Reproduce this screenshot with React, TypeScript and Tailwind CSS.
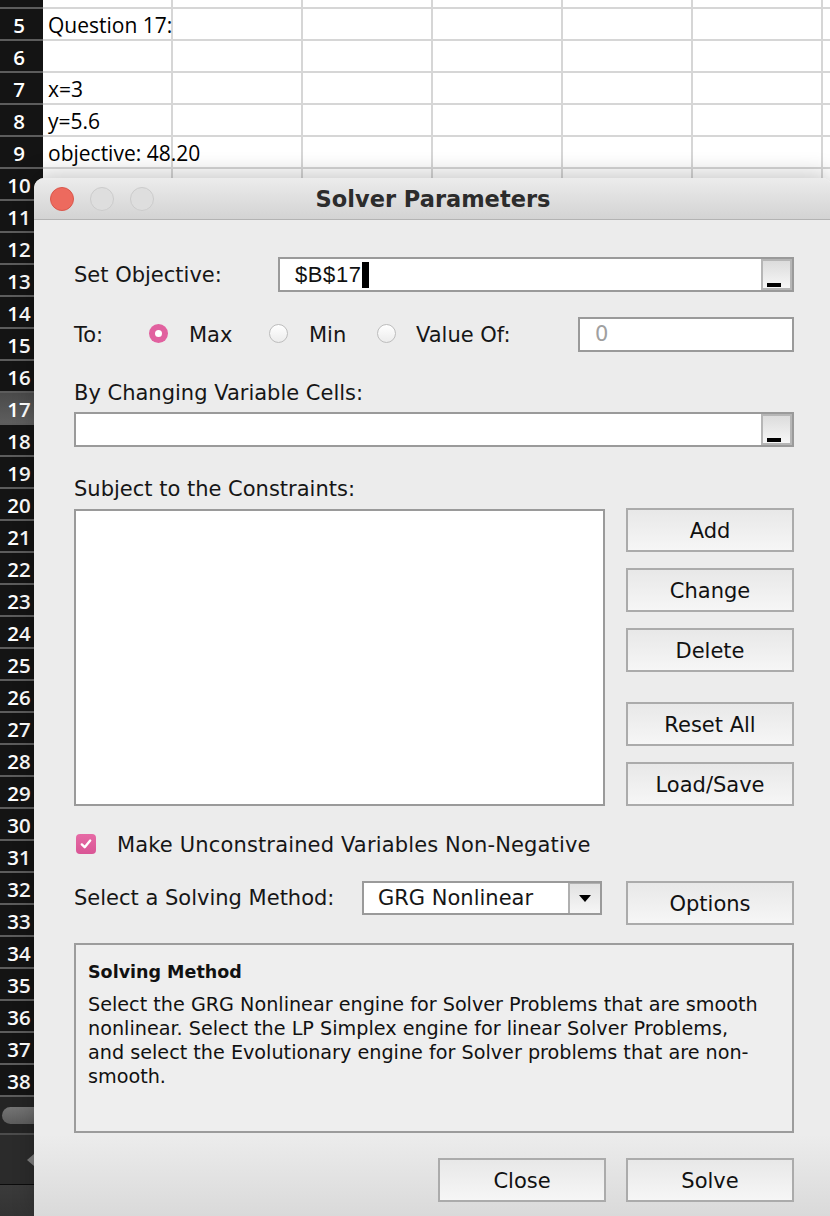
import React from "react";

const ROWS = Array.from({ length: 34 }, (_, i) => i + 5);
const CELL_TEXT: Record<number, string> = {
  5: "Question 17:",
  7: "x=3",
  8: "y=5.6",
  9: "objective: 48.20",
};

function SheetRow({ n }: { n: number }) {
  return (
    <div className="h-[32px] flex border-b-2 border-[#d6d6d6] box-border">
      <div className="w-[130px] shrink-0 border-r-2 border-[#d6d6d6] relative">
        {CELL_TEXT[n] && (
          <span className="absolute left-[5px] top-[2px] h-[30px] flex items-center whitespace-nowrap text-[21px] text-black font-['Open_Sans',sans-serif]">
            {CELL_TEXT[n]}
          </span>
        )}
      </div>
      <div className="w-[130px] shrink-0 border-r-2 border-[#d6d6d6]" />
      <div className="w-[130px] shrink-0 border-r-2 border-[#d6d6d6]" />
      <div className="w-[130px] shrink-0 border-r-2 border-[#d6d6d6]" />
      <div className="w-[130px] shrink-0 border-r-2 border-[#d6d6d6]" />
      <div className="w-[130px] shrink-0 border-r-2 border-[#d6d6d6]" />
      <div className="flex-1" />
    </div>
  );
}

function PickerInput({ children }: { children?: React.ReactNode }) {
  return (
    <div className="flex-1 h-[35px] border-2 border-[#9a9a9a] bg-white flex box-border">
      <div className="flex-1 flex items-center pl-[15px]">{children}</div>
      <div className="w-[31px] h-full border-2 border-[#b6b6b6] bg-gradient-to-b from-[#dcdcdc] to-[#f7f7f7] flex items-end pl-[4px] pb-[1px] box-border">
        <div className="w-[14px] h-[4px] bg-black" />
      </div>
    </div>
  );
}

function Radio({ on }: { on?: boolean }) {
  if (on)
    return (
      <div className="w-[19px] h-[19px] rounded-full bg-[#e1619f] flex items-center justify-center shrink-0 -mt-[2px]">
        <div className="w-[7px] h-[7px] rounded-full bg-white" />
      </div>
    );
  return (
    <div className="w-[19px] h-[19px] rounded-full border border-[#bdbdbd] bg-gradient-to-b from-white to-[#ececec] shrink-0 box-border -mt-[2px]" />
  );
}

function Btn({ children, className = "" }: { children: React.ReactNode; className?: string }) {
  return (
    <div
      className={`w-[168px] h-[44px] border-2 border-[#ababab] bg-gradient-to-b from-[#e8e8e8] to-[#f6f6f6] flex items-center justify-center pt-[3px] text-[21px] text-[#111] box-border ${className}`}
    >
      {children}
    </div>
  );
}

export default function App() {
  return (
    <div className="relative w-[830px] h-[1216px] overflow-hidden bg-white">
      <div className="flex h-full">
        {/* row headers */}
        <div className="w-[43px] shrink-0 flex flex-col bg-[#141414] font-['Open_Sans',sans-serif]">
          <div className="h-[9px] border-b-2 border-[#5c5c5c] box-border" />
          {ROWS.map((n) => (
            <div
              key={n}
              className={`h-[32px] shrink-0 border-b-2 border-[#5c5c5c] box-border flex items-center justify-center pr-[5px] pt-[3px] text-white text-[20.5px] font-semibold ${
                n === 17 ? "bg-gradient-to-b from-[#4a4a4a] to-[#5e5e5e] text-[#e8e8e8]" : ""
              }`}
            >
              {n}
            </div>
          ))}
          <div className="h-[38px] shrink-0 bg-[#242424] border-b-2 border-[#4c4c4c] box-border flex items-center">
            <div className="ml-[2px] w-[60px] h-[17px] rounded-full bg-gradient-to-b from-[#747474] to-[#5c5c5c]" />
          </div>
          <div className="h-[50px] shrink-0 bg-[#2b2b2b] border-b border-[#0c0c0c] box-border flex items-center">
            <svg width="8" height="12" viewBox="0 0 8 12" className="ml-[27px]">
              <polygon points="7,0 0,6 7,12" fill="#7c7c7c" />
            </svg>
          </div>
          <div className="flex-1 bg-gradient-to-b from-[#3b3b3b] to-[#333333]" />
        </div>
        {/* cells */}
        <div className="flex-1 flex flex-col">
          <div className="h-[9px] flex border-b-2 border-[#d6d6d6] box-border">
            {[0, 1, 2, 3, 4, 5].map((i) => (
              <div key={i} className="w-[130px] shrink-0 border-r-2 border-[#d6d6d6]" />
            ))}
          </div>
          {ROWS.map((n) => (
            <SheetRow key={n} n={n} />
          ))}
        </div>
      </div>

      {/* Solver dialog window */}
      <div className="absolute left-[34px] top-[178px] w-[798px] h-[1040px] rounded-t-[10px] overflow-hidden shadow-[0_-4px_22px_rgba(0,0,0,0.22)] bg-[linear-gradient(to_bottom,#ececec_0%,#ececec_92%,#d9d9d9_100%)] flex flex-col font-['DejaVu_Sans','Noto_Sans',sans-serif] text-[#161616]">
        {/* title bar */}
        <div className="h-[42px] shrink-0 flex items-center border-b border-[#b3b3b3] bg-gradient-to-b from-[#ececec] to-[#d3d3d3] box-border">
          <div className="w-[150px] flex items-center gap-[16px] pl-[16px]">
            <div className="w-[24px] h-[24px] rounded-full bg-[#ed6a5e] border border-[#d9574c] box-border" />
            <div className="w-[24px] h-[24px] rounded-full bg-[#dedede] border border-[#cbcbcb] box-border" />
            <div className="w-[24px] h-[24px] rounded-full bg-[#dedede] border border-[#cbcbcb] box-border" />
          </div>
          <div className="flex-1 text-center pt-[3px] text-[22.5px] font-bold text-[#2c2c2c]">Solver Parameters</div>
          <div className="w-[150px]" />
        </div>

        {/* body */}
        <div className="flex flex-col pl-[40px] pr-[38px] text-[21px]">
          {/* Set objective */}
          <div className="mt-[37px] h-[35px] flex items-center">
            <div className="w-[204px] shrink-0 pt-[3px]">Set Objective:</div>
            <PickerInput>
              <span className="font-['Liberation_Sans',sans-serif] text-[22px] tracking-[0.6px] text-[#111]">$B$17</span>
              <span className="w-[7px] h-[26px] bg-black" />
            </PickerInput>
          </div>

          {/* To: */}
          <div className="mt-[25px] h-[35px] flex items-center">
            <div className="w-[75px] shrink-0 pt-[3px]">To:</div>
            <div className="w-[120px] shrink-0 flex items-center">
              <Radio on />
              <span className="ml-[21px] pt-[3px]">Max</span>
            </div>
            <div className="w-[108px] shrink-0 flex items-center">
              <Radio />
              <span className="ml-[21px] pt-[3px]">Min</span>
            </div>
            <div className="w-[201px] shrink-0 flex items-center">
              <Radio />
              <span className="ml-[20px] pt-[3px]">Value Of:</span>
            </div>
            <div className="flex-1 h-[35px] border-2 border-[#9a9a9a] bg-white flex items-center pl-[15px] text-[#a0a0a0] box-border">
              0
            </div>
          </div>

          <div className="mt-[27px] h-[24px] leading-[24px] pt-[2px]">By Changing Variable Cells:</div>
          <div className="mt-[9px] flex">
            <PickerInput />
          </div>

          <div className="mt-[28px] h-[24px] leading-[24px] pt-[2px]">Subject to the Constraints:</div>
          <div className="mt-[9px] flex items-start">
            <div className="w-[531px] h-[297px] mt-[1px] border-2 border-[#9a9a9a] bg-white box-border" />
            <div className="ml-[21px] flex flex-col">
              <Btn>Add</Btn>
              <Btn className="mt-[16px]">Change</Btn>
              <Btn className="mt-[16px]">Delete</Btn>
              <Btn className="mt-[30px]">Reset All</Btn>
              <Btn className="mt-[16px]">Load/Save</Btn>
            </div>
          </div>

          {/* checkbox */}
          <div className="mt-[26px] h-[24px] flex items-center">
            <div className="ml-[2px] w-[20px] h-[20px] rounded-[4px] bg-gradient-to-b from-[#e66aa5] to-[#d95595] flex items-center justify-center">
              <svg width="14" height="14" viewBox="0 0 14 14">
                <path d="M2.8 7.4 L5.7 10.2 L11.2 3.6" stroke="white" strokeWidth="2.4" fill="none" strokeLinecap="round" strokeLinejoin="round" />
              </svg>
            </div>
            <span className="ml-[21px] pt-[3px] tracking-[0.15px]">Make Unconstrained Variables Non-Negative</span>
          </div>

          {/* solving method select */}
          <div className="mt-[25px] flex items-start">
            <div className="w-[288px] shrink-0 h-[34px] flex items-center pt-[2px]">Select a Solving Method:</div>
            <div className="w-[240px] h-[34px] border-2 border-[#9a9a9a] bg-white flex box-border">
              <div className="flex-1 flex items-center pl-[14px] pt-[2px]">GRG Nonlinear</div>
              <div className="w-[32px] h-full border-l-2 border-t border-[#b0b0b0] bg-gradient-to-b from-[#e2e2e2] to-[#f6f6f6] flex items-center justify-center box-border">
                <svg width="12" height="7" viewBox="0 0 12 7">
                  <polygon points="0,0 12,0 6,7" fill="#000" />
                </svg>
              </div>
            </div>
            <Btn className="ml-[24px] h-[42px]">Options</Btn>
          </div>

          {/* Solving method description */}
          <div className="mt-[18px] h-[190px] border-2 border-[#9c9c9c] bg-[#eeeeee] pl-[12px] pt-[13px] box-border">
            <div className="h-[24px] leading-[24px] text-[17.5px] font-bold text-[#111] pt-[2px]">Solving Method</div>
            <div className="mt-[10px] text-[19.2px] leading-[24px] text-[#111] whitespace-nowrap pt-[1px]">
              <div>Select the GRG Nonlinear engine for Solver Problems that are smooth</div>
              <div>nonlinear. Select the LP Simplex engine for linear Solver Problems,</div>
              <div>and select the Evolutionary engine for Solver problems that are non-</div>
              <div>smooth.</div>
            </div>
          </div>

          {/* footer */}
          <div className="mt-[25px] flex justify-end gap-[20px]">
            <Btn>Close</Btn>
            <Btn>Solve</Btn>
          </div>
        </div>
      </div>
    </div>
  );
}
